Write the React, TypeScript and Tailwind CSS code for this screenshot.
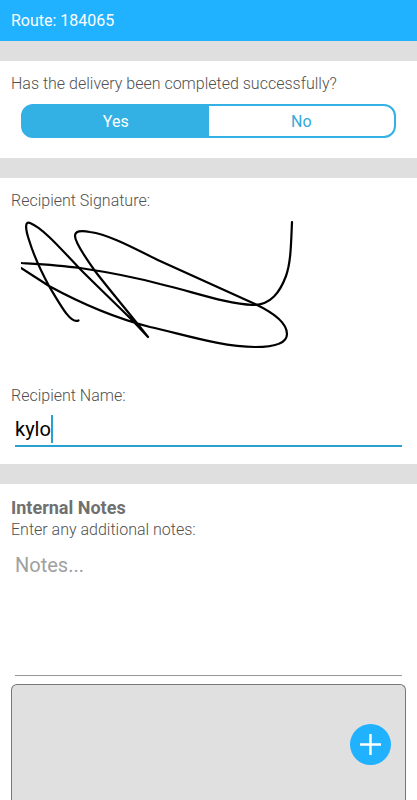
import { useState } from "react";

const ANSWERS = ["Yes", "No"];

function Divider() {
  return <div className="h-5 shrink-0 bg-[#dfdfdf]" />;
}

function SignaturePad() {
  return (
    <svg
      role="img"
      aria-label="Recipient signature"
      viewBox="21 216 375 150"
      className="block h-[150px] w-[375px] max-w-full"
      fill="none"
      stroke="#000"
      strokeWidth="2.2"
      strokeLinecap="round"
      strokeLinejoin="round"
    >
      <path d="M78.5 320.5C71 324 62 308 49 286C42 273 33 253 29 240C25 228 25 221 30 223C43 228 62 250 80 269C98 287 116 304 133 321L148 337C131 315 111 292 95 271C85 257 75 241 75 236C75 231 81 230 90 232C111 235 137 250 160 261L255 304C274 313 287 323 287 334C287 344 274 347 255 347C222 347 182 334 150 327C115 318 82 304 49 286L21 268" />
      <path d="M21 263C38 264 59 265 80 268C107 272 134 277 160 284C191 291 226 304 253 305C271 305 280 292 286 276C291 262 291 244 292 222" />
    </svg>
  );
}

function RecipientName() {
  const [name, setName] = useState("kylo");

  return (
    <div className="flex flex-col">
      <label htmlFor="recipient-name" className="text-base leading-5 font-light">
        Recipient Name:
      </label>
      <div className="mx-1 mt-[9px] flex h-8 items-start border-b-2 border-[#2a9fd2]">
        <input
          id="recipient-name"
          type="text"
          value={name}
          onChange={(e) => setName(e.target.value)}
          className="field-sizing-content h-7 p-0 text-xl text-black caret-transparent outline-none"
        />
        {/* Text cursor */}
        <span className="h-7 w-0.5 bg-[#2a9fd2]" />
      </div>
    </div>
  );
}

export default function App() {
  const [answer, setAnswer] = useState("Yes");
  const [notes, setNotes] = useState("");

  return (
    <div className="flex h-screen flex-col overflow-hidden bg-white font-['Roboto',sans-serif] text-[#505050]">
      <header className="shrink-0 bg-[#20b1ff] px-[11px] pt-[11px] pb-2.5">
        <h1 className="text-base leading-5 text-white">Route: 184065</h1>
      </header>

      <Divider />

      <section className="px-[11px] pt-[13px] pb-5">
        <p className="text-base leading-5 font-light">
          Has the delivery been completed successfully?
        </p>
        <div className="mx-2.5 mt-2.5 grid h-[34px] grid-cols-2 overflow-hidden rounded-xl border-2 border-[#33b1e4] bg-[#33b1e4]">
          {ANSWERS.map((item) => (
            <button
              key={item}
              type="button"
              aria-pressed={answer === item}
              onClick={() => setAnswer(item)}
              className={
                answer === item
                  ? "bg-[#33b1e4] pt-0.5 text-base text-white"
                  : "bg-white pt-0.5 text-base text-[#33a9dc]"
              }
            >
              {item}
            </button>
          ))}
        </div>
      </section>

      <Divider />

      <section className="px-[11px] pt-[13px] pb-[17px]">
        <h2 className="text-base leading-5 font-light">Recipient Signature:</h2>
        <div className="mx-2.5 mt-[5px] mb-5">
          <SignaturePad />
        </div>
        <RecipientName />
      </section>

      <Divider />

      <section className="flex flex-1 flex-col px-[11px] pt-3">
        <h2 className="text-lg leading-6 font-bold text-[#707070]">
          Internal Notes
        </h2>
        <label htmlFor="notes" className="text-base leading-5 font-light">
          Enter any additional notes:
        </label>
        <textarea
          id="notes"
          value={notes}
          onChange={(e) => setNotes(e.target.value)}
          placeholder="Notes..."
          className="mx-1 mt-[11px] h-[125px] shrink-0 resize-none border-b border-[#999] p-0 text-xl text-black outline-none placeholder:text-[#a0a0a0]"
        />
        <div className="mt-2 flex flex-1 items-start justify-end rounded-t-md border border-b-0 border-[#777] bg-[#e0e0e0] px-3.5 pt-[39px]">
          <button
            type="button"
            aria-label="Add attachment"
            className="flex size-[41px] items-center justify-center rounded-full bg-[#20b1ff] text-white"
          >
            <svg viewBox="0 0 21 21" className="size-[21px]" fill="none" stroke="currentColor" strokeWidth="2.4">
              <path d="M10.5 0V21M0 10.5H21" />
            </svg>
          </button>
        </div>
      </section>
    </div>
  );
}
